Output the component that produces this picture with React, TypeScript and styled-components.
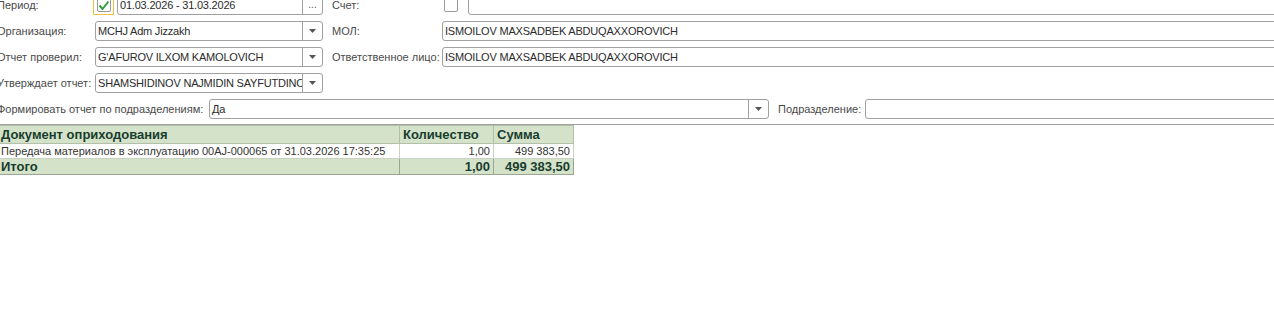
import React from "react";
import styled, { createGlobalStyle } from "styled-components";

const Global = createGlobalStyle`
	body {
		margin: 0;
		background: #ffffff;
		overflow: hidden;
		font-family: "Liberation Sans", Arial, sans-serif;
	}
`;

const rows = [
	{ doc: "Передача материалов в эксплуатацию 00AJ-000065 от 31.03.2026 17:35:25", qty: "1,00", sum: "499 383,50" },
];

const Arrow = () => (
	<svg width="7" height="4" viewBox="0 0 7 4">
		<path d="M0 0 L7 0 L3.5 4 Z" fill="#555" />
	</svg>
);

const Check = () => (
	<svg width="12" height="11" viewBox="0 0 12 11">
		<path d="M1.5 5.5 L4.5 9 L10.5 1.5" fill="none" stroke="#2e9e3e" strokeWidth="2" />
	</svg>
);

const App = () => {
	return (
		<Page>
			<Global />
			<Form>
				<Row>
					<Left>
						<Label>Период:</Label>
						<CheckWrap $focused>
							<CheckBox><Check /></CheckBox>
						</CheckWrap>
						<Field $w={206} $ml={3}>
							<Value>01.03.2026 - 31.03.2026</Value>
							<Btn>...</Btn>
						</Field>
					</Left>
					<RightLabel>Счет:</RightLabel>
					<CheckWrap>
						<CheckBox />
					</CheckWrap>
					<Field $grow $ml={7}>
						<Value />
					</Field>
				</Row>
				<Row>
					<Left>
						<Label>Организация:</Label>
						<Field $w={228}>
							<Value>MCHJ Adm Jizzakh</Value>
							<Btn><Arrow /></Btn>
						</Field>
					</Left>
					<RightLabel>МОЛ:</RightLabel>
					<Field $grow>
						<Value>ISMOILOV MAXSADBEK ABDUQAXXOROVICH</Value>
					</Field>
				</Row>
				<Row>
					<Left>
						<Label>Отчет проверил:</Label>
						<Field $w={228}>
							<Value>G'AFUROV ILXOM KAMOLOVICH</Value>
							<Btn><Arrow /></Btn>
						</Field>
					</Left>
					<RightLabel>Ответственное лицо:</RightLabel>
					<Field $grow>
						<Value>ISMOILOV MAXSADBEK ABDUQAXXOROVICH</Value>
					</Field>
				</Row>
				<Row>
					<Left>
						<Label>Утверждает отчет:</Label>
						<Field $w={228}>
							<Value>SHAMSHIDINOV NAJMIDIN SAYFUTDINOVICH</Value>
							<Btn><Arrow /></Btn>
						</Field>
					</Left>
				</Row>
				<Row>
					<WideLabel>Формировать отчет по подразделениям:</WideLabel>
					<Field $w={560}>
						<Value>Да</Value>
						<Btn><Arrow /></Btn>
					</Field>
					<SubLabel>Подразделение:</SubLabel>
					<Field $grow>
						<Value />
					</Field>
				</Row>
			</Form>
			<Divider />
			<Table>
				<colgroup>
					<col style={{ width: 402 }} />
					<col style={{ width: 94 }} />
					<col style={{ width: 80 }} />
				</colgroup>
				<thead>
					<tr>
						<Head>Документ оприходования</Head>
						<Head>Количество</Head>
						<Head>Сумма</Head>
					</tr>
				</thead>
				<tbody>
					{rows.map((r) => (
						<tr key={r.doc}>
							<Cell>{r.doc}</Cell>
							<Cell $num>{r.qty}</Cell>
							<Cell $num>{r.sum}</Cell>
						</tr>
					))}
					<tr>
						<Total>Итого</Total>
						<Total $num>1,00</Total>
						<Total $num>499 383,50</Total>
					</tr>
				</tbody>
			</Table>
		</Page>
	);
};

export default App;

const Page = styled.div`
	width: 1300px;
	margin: -5px 0 0 -3px;
	font-size: 11px;
`;

const Form = styled.div`
	display: flex;
	flex-direction: column;
	gap: 6px;
`;

const Row = styled.div`
	display: flex;
	align-items: center;
	height: 20px;
`;

const Left = styled.div`
	display: flex;
	align-items: center;
	width: 335px;
	flex-shrink: 0;
`;

const Label = styled.div`
	width: 98px;
	color: #4a4a4a;
	white-space: nowrap;
`;

const RightLabel = styled.div`
	width: 110px;
	flex-shrink: 0;
	color: #4a4a4a;
	white-space: nowrap;
`;

const WideLabel = styled.div`
	width: 212px;
	flex-shrink: 0;
	color: #4a4a4a;
	white-space: nowrap;
`;

const SubLabel = styled.div`
	margin-left: 9px;
	width: 87px;
	flex-shrink: 0;
	color: #4a4a4a;
	white-space: nowrap;
`;

const CheckWrap = styled.div<{ $focused?: boolean }>`
	width: 21px;
	height: 20px;
	box-sizing: border-box;
	display: flex;
	align-items: center;
	justify-content: center;
	margin-left: -2px;
	border: 1px solid ${(p) => (p.$focused ? "#f0c040" : "transparent")};
`;

const CheckBox = styled.div`
	width: 14px;
	height: 14px;
	box-sizing: border-box;
	border: 1px solid #9a9a9a;
	border-radius: 2px;
	background: #fff;
	display: flex;
	align-items: center;
	justify-content: center;
`;

const Field = styled.div<{ $w?: number; $grow?: boolean; $ml?: number }>`
	display: flex;
	height: 20px;
	box-sizing: border-box;
	border: 1px solid #a0a0a0;
	border-radius: 3px;
	margin-left: ${(p) => p.$ml || 0}px;
	width: ${(p) => (p.$w ? `${p.$w}px` : "auto")};
	flex: ${(p) => (p.$grow ? "1" : "none")};
	background: #fff;
	overflow: hidden;
`;

const Value = styled.div`
	flex: 1;
	padding: 0 2px;
	line-height: 18px;
	color: #2b2b2b;
	white-space: nowrap;
	overflow: hidden;
	font-size: 11px;
	letter-spacing: -0.2px;
`;

const Btn = styled.div`
	width: 19px;
	flex-shrink: 0;
	border-left: 1px solid #a0a0a0;
	display: flex;
	align-items: center;
	justify-content: center;
	color: #555;
	font-size: 10px;
	line-height: 18px;
`;

const Divider = styled.div`
	height: 1px;
	margin-top: 5px;
	background: #a0a0a0;
`;

const Table = styled.table`
	border-collapse: collapse;
	table-layout: fixed;
	width: 576px;
`;

const Head = styled.th`
	background: #d5e2ca;
	color: #183d2e;
	font-size: 13px;
	font-weight: bold;
	text-align: left;
	height: 17px;
	padding: 0 3px;
	border: 1px solid #b4bfa9;
	white-space: nowrap;
`;

const Cell = styled.td<{ $num?: boolean }>`
	background: #fff;
	color: #333;
	font-size: 11px;
	height: 14px;
	padding: 0 3px;
	text-align: ${(p) => (p.$num ? "right" : "left")};
	border: 1px solid #c9d2c0;
	white-space: nowrap;
`;

const Total = styled.td<{ $num?: boolean }>`
	background: #d5e2ca;
	color: #183d2e;
	font-size: 13px;
	font-weight: bold;
	height: 15px;
	padding: 0 3px;
	text-align: ${(p) => (p.$num ? "right" : "left")};
	border: 1px solid #9aa592;
	white-space: nowrap;
`;
